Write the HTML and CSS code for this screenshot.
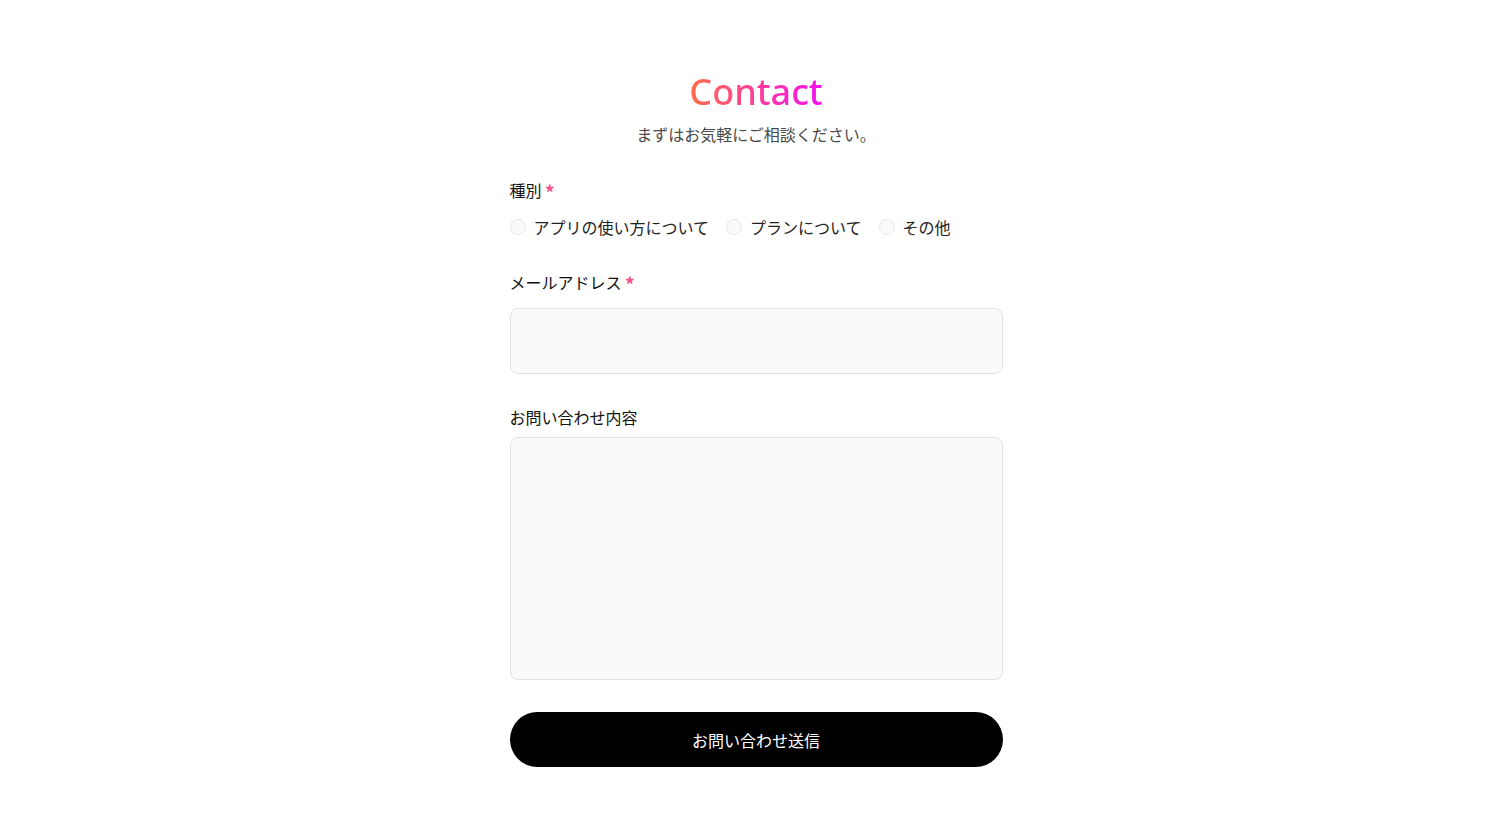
FILE: index.html
```html
<!DOCTYPE html>
<html lang="ja">
<head>
<meta charset="utf-8">
<title>Contact</title>
<link rel="stylesheet" href="styles.css">
</head>
<body>
<main class="page">
  <header class="head">
    <h1 class="title">Contact</h1>
    <p class="lead">まずはお気軽にご相談ください。</p>
  </header>
  <form class="form">
    <div class="field">
      <div class="label">種別 <span class="req">*</span></div>
      <div class="radios">
        <label class="radio"><input type="radio" name="kind"><span>アプリの使い方について</span></label>
        <label class="radio"><input type="radio" name="kind"><span>プランについて</span></label>
        <label class="radio"><input type="radio" name="kind"><span>その他</span></label>
      </div>
    </div>
    <div class="field">
      <label class="label">メールアドレス <span class="req">*</span></label>
      <input class="input" type="email">
    </div>
    <div class="field field-msg">
      <label class="label">お問い合わせ内容</label>
      <textarea class="textarea"></textarea>
    </div>
    <button class="submit" type="button">お問い合わせ送信</button>
  </form>
</main>
</body>
</html>
```

FILE: styles.css
```css
* { box-sizing: border-box; }
html, body { margin: 0; padding: 0; background: #fff; }
body {
  font-family: "Noto Sans CJK JP", "Noto Sans", sans-serif;
  color: #222;
}
.page {
  width: 493px;
  margin: 0 auto;
  padding-top: 64px;
}
.head { text-align: center; }
.title {
  margin: 0;
  font-family: "Noto Sans", "Noto Sans CJK JP", sans-serif;
  font-weight: 500;
  font-size: 36px;
  line-height: 56px;
  background: linear-gradient(90deg, #ff6e4a 0%, #ff3d9a 50%, #f00ff0 100%);
  -webkit-background-clip: text;
  background-clip: text;
  color: transparent;
  display: inline-block;
}
.lead {
  margin: 0;
  font-size: 16px;
  line-height: 28px;
  color: #4a4a4a;
}
.form {
  margin-top: 30px;
  display: flex;
  flex-direction: column;
}
.field { display: flex; flex-direction: column; }
.label {
  font-size: 16px;
  line-height: 24px;
  font-weight: 400;
  color: #111;
}
.req {
  display: inline-block;
  color: #f5508a;
  font-size: 19px;
  line-height: 16px;
  font-weight: 700;
  transform: translateY(3px);
}
.radios {
  display: flex;
  gap: 17px;
  margin-top: 13px;
  margin-bottom: 31px;
}
.radio {
  display: flex;
  align-items: center;
  gap: 8px;
  font-size: 16px;
  line-height: 24px;
  color: #222;
}
.radio input {
  appearance: none;
  -webkit-appearance: none;
  margin: 0;
  width: 16px;
  height: 16px;
  border-radius: 50%;
  border: 1px solid #e6e6e6;
  background: #fafafa;
}
.input {
  margin-top: 14px;
  height: 66px;
  border: 1px solid #e2e2e2;
  border-radius: 8px;
  background: #fafafa;
  margin-bottom: 31px;
}
.textarea {
  margin-top: 8px;
  height: 243px;
  border: 1px solid #e2e2e2;
  border-radius: 8px;
  background: #fafafa;
  resize: none;
}
.submit {
  margin-top: 32px;
  height: 55px;
  border: none;
  border-radius: 28px;
  background: #000;
  color: #fff;
  font-family: "Noto Sans CJK JP", sans-serif;
  font-size: 16px;
  font-weight: 400;
}
```
